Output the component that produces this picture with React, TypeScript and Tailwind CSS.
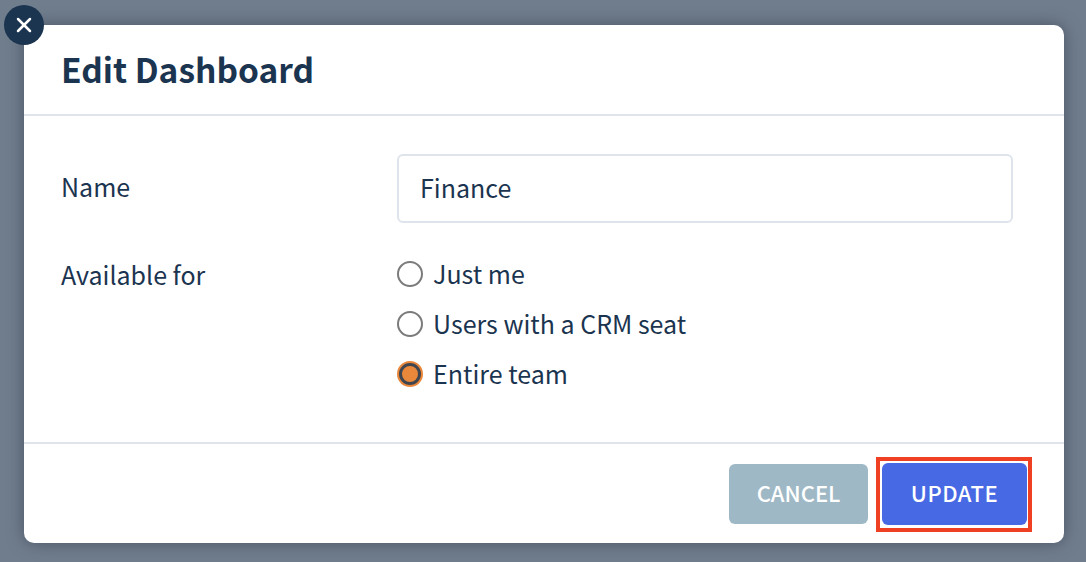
import { X } from "lucide-react";

const font = { fontFamily: '"Noto Sans CJK SC", "Noto Sans", sans-serif' };

function Radio({ label, checked }: { label: string; checked?: boolean }) {
  return (
    <label className="flex h-[50px] items-center gap-[10px] text-[25px] text-[#1b3450]">
      {checked ? (
        <span className="flex h-[26px] w-[26px] items-center justify-center rounded-full bg-[#e9873b]">
          <span className="h-[22px] w-[22px] rounded-full border-[3px] border-[#3f4650] bg-[#e9873b]" />
        </span>
      ) : (
        <span className="h-[26px] w-[26px] rounded-full border-2 border-[#7b7b7b] bg-white" />
      )}
      <span className="-translate-y-[1px] leading-[34px]">{label}</span>
    </label>
  );
}

export default function App() {
  return (
    <div style={font} className="h-[562px] w-[1086px] overflow-hidden bg-[#707d8d] pl-[24px] pt-[25px]">
      <div className="relative h-[518px] w-[1040px] rounded-[10px] bg-white shadow-[0_0_16px_rgba(40,50,65,0.55)]">
        <button className="absolute -left-[20px] -top-[20px] flex h-[40px] w-[40px] items-center justify-center rounded-full bg-[#1b3450] text-white">
          <X size={24} strokeWidth={2.5} />
        </button>

        {/* Header */}
        <div className="flex h-[91px] items-center border-b-2 border-[#dfe4ec] pb-[2px] pl-[37px]">
          <h2 className="text-[33.5px] font-semibold leading-[46px] text-[#1b3450]">Edit Dashboard</h2>
        </div>

        {/* Body */}
        <div className="h-[326px] pl-[37px] pr-[51px] pt-[38px]">
          <div className="flex items-center">
            <span className="w-[336px] -translate-y-[3px] text-[25px] leading-[34px] text-[#1b3450]">Name</span>
            <input
              readOnly
              value="Finance"
              className="h-[69px] w-[616px] rounded-[6px] border-2 border-[#dfe4ec] bg-white px-[21px] pb-[3px] text-[25px] text-[#1b3450] outline-none"
            />
          </div>
          <div className="mt-[26px] flex">
            <span className="w-[336px] text-[25px] leading-[50px] text-[#1b3450]">Available for</span>
            <div className="flex flex-col">
              <Radio label="Just me" />
              <Radio label="Users with a CRM seat" />
              <Radio label="Entire team" checked />
            </div>
          </div>
        </div>

        {/* Footer */}
        <div className="flex h-[101px] items-start justify-end gap-[8px] border-t-2 border-[#dfe4ec] pr-[32px] pt-[13px]">
          <button className="mt-[7px] h-[60px] w-[139px] rounded-[6px] bg-[#9fb8c6] pb-[3px] text-[22px] font-medium text-white">
            CANCEL
          </button>
          <div className="border-[4px] border-[#ef4023] pb-[3px] pl-[2px] pr-[1px] pt-[2px]">
            <button className="block h-[62px] w-[145px] rounded-[6px] bg-[#4769e4] pb-[3px] text-[22px] font-medium tracking-[0.5px] text-white">
              UPDATE
            </button>
          </div>
        </div>
      </div>
    </div>
  );
}
